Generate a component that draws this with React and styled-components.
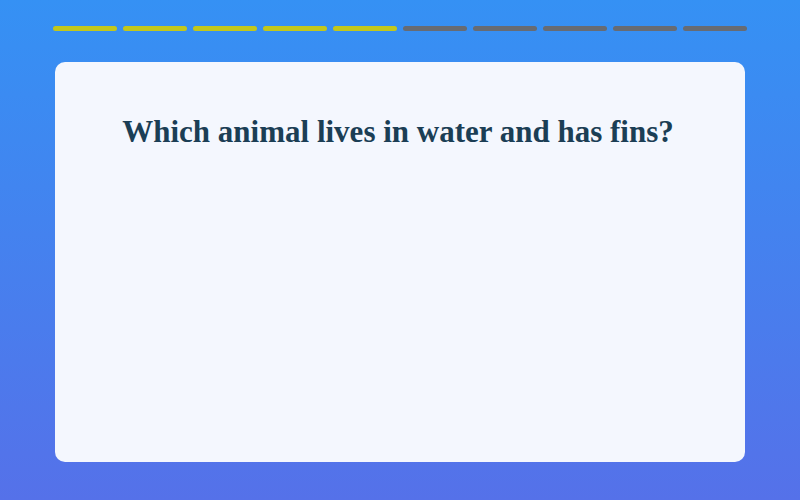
import styled, { createGlobalStyle } from "styled-components";

const GlobalStyle = createGlobalStyle`
  html, body {
    margin: 0;
    padding: 0;
  }
  body {
    width: 800px;
    height: 500px;
    overflow: hidden;
    background: linear-gradient(180deg, #3591f4 0%, #5571e9 100%);
  }
`;

const TOTAL = 10;
const DONE = 5;

const App = () => {
  return (
    <>
      <GlobalStyle />
      <Page>
        <Progress>
          {Array.from({ length: TOTAL }).map((_, i) => (
            <Segment key={i} $done={i < DONE} />
          ))}
        </Progress>
        <QuestionCard>
          <Question>Which animal lives in water and has fins?</Question>
        </QuestionCard>
      </Page>
    </>
  );
};

const Page = styled.div`
  width: 800px;
  height: 500px;
  box-sizing: border-box;
  padding: 26px 53px 38px;
  display: flex;
  flex-direction: column;
`;

const Progress = styled.div`
  display: flex;
  gap: 6px;
  height: 4.5px;
`;

const Segment = styled.div`
  flex: 1;
  border-radius: 3px;
  background-color: ${(p) => (p.$done ? "#c3c71b" : "#676b73")};
`;

const QuestionCard = styled.div`
  margin: 31px 2px 0;
  flex: 1;
  background-color: #f4f7fe;
  border-radius: 10px;
  padding-top: 52px;
  box-sizing: border-box;
`;

const Question = styled.h1`
  margin: 0 0 0 -4px;
  text-align: center;
  font-family: "Liberation Serif", serif;
  font-weight: 700;
  font-size: 31px;
  color: #1b3e55;
`;

export default App;
